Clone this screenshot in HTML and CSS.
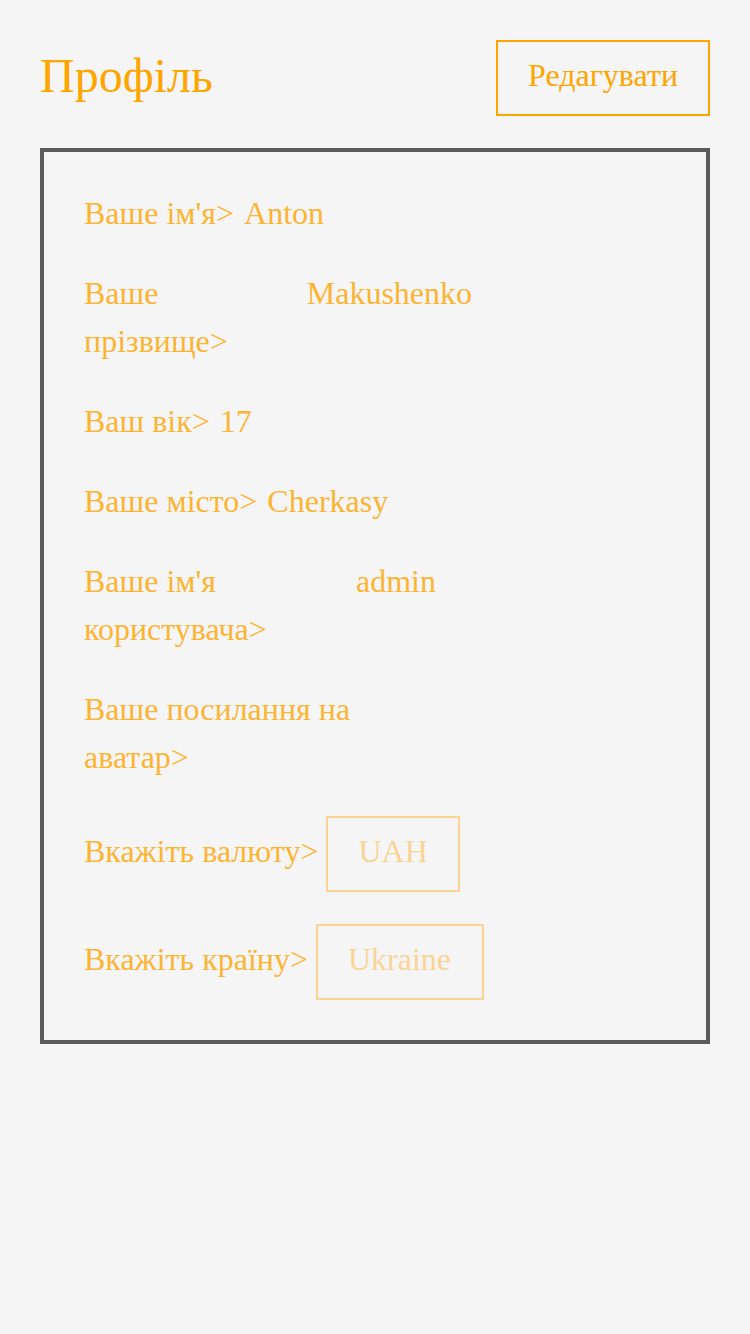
FILE: index.html
```html
<!DOCTYPE html>
<html lang="uk">
<head>
<meta charset="utf-8">
<meta name="viewport" content="width=device-width, initial-scale=1">
<title>Профіль</title>
<link rel="stylesheet" href="styles.css">
</head>
<body>
<main class="page">
  <header class="header">
    <h1 class="title">Профіль</h1>
    <button class="button" type="button">Редагувати</button>
  </header>
  <form class="card">
    <div class="group">
      <div class="row">
        <label class="label" for="first-name">Ваше ім'я&gt;</label>
        <input class="field" id="first-name" type="text" value="Anton" readonly>
      </div>
      <div class="row">
        <label class="label" for="last-name">Ваше прізвище&gt;</label>
        <input class="field" id="last-name" type="text" value="Makushenko" readonly>
      </div>
      <div class="row">
        <label class="label" for="age">Ваш вік&gt;</label>
        <input class="field" id="age" type="text" value="17" readonly>
      </div>
      <div class="row">
        <label class="label" for="city">Ваше місто&gt;</label>
        <input class="field" id="city" type="text" value="Cherkasy" readonly>
      </div>
      <div class="row">
        <label class="label" for="username">Ваше ім'я користувача&gt;</label>
        <input class="field" id="username" type="text" value="admin" readonly>
      </div>
      <div class="row">
        <label class="label" for="avatar">Ваше посилання на аватар&gt;</label>
        <input class="field" id="avatar" type="text" value="" readonly>
      </div>
    </div>
    <div class="group">
      <div class="row row-select">
        <label class="label" for="currency">Вкажіть валюту&gt;</label>
        <select class="button select" id="currency" disabled><option>UAH</option></select>
      </div>
      <div class="row row-select">
        <label class="label" for="country">Вкажіть країну&gt;</label>
        <select class="button select" id="country" disabled><option>Ukraine</option></select>
      </div>
    </div>
  </form>
</main>
</body>
</html>
```
FILE: styles.css
```css
* {
  box-sizing: border-box;
}

body {
  margin: 0;
  background: #f5f5f5;
  color: orange;
  font-family: "Liberation Serif", "Times New Roman", serif;
  font-size: 32px;
  line-height: 48px;
}

.page {
  padding: 40px;
}

.header {
  display: flex;
  justify-content: space-between;
  align-items: flex-start;
  margin-bottom: 32px;
}

.title {
  margin: 0;
  font-size: 48px;
  font-weight: 400;
  line-height: 72px;
}

.button {
  appearance: none;
  margin: 0;
  padding: 9px 30px 15px;
  border: 2px solid orange;
  border-radius: 0;
  background: transparent;
  color: orange;
  font: inherit;
}

.card {
  display: flex;
  flex-direction: column;
  gap: 35px;
  padding: 37px 40px 40px;
  border: 4px solid #5a5a5a;
}

.group {
  display: flex;
  flex-direction: column;
  gap: 32px;
}

.row {
  display: flex;
  align-items: flex-start;
  gap: 10px;
}

.label,
.field {
  opacity: 0.8;
}

.field {
  width: 382px;
  min-width: 0;
  height: 48px;
  margin: 0;
  padding: 0;
  border: 0;
  outline: 0;
  background: transparent;
  color: orange;
  font: inherit;
}

.row-select {
  align-items: baseline;
  gap: 8px;
}

.select {
  opacity: 0.4;
}
```
